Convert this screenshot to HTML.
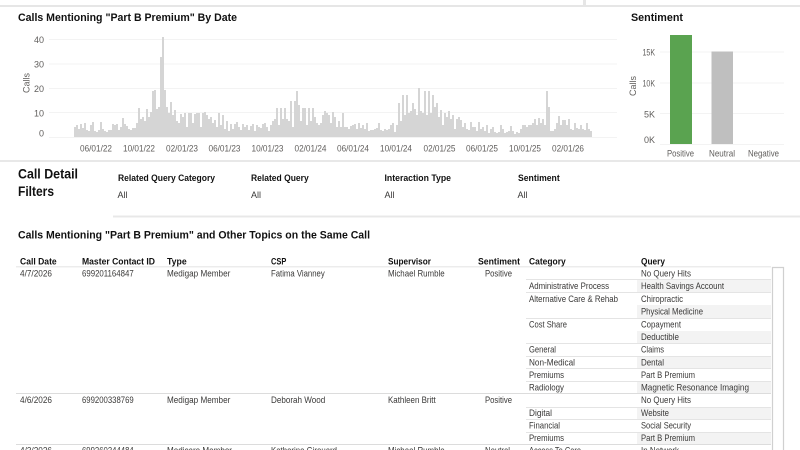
<!DOCTYPE html>
<html lang="en">
<head>
<meta charset="utf-8">
<title>Calls Mentioning Part B Premium</title>
<style>
html,body{margin:0;padding:0;background:#fff;width:800px;height:450px;overflow:hidden}
svg{display:block;filter:blur(.25px)}
text{font-family:"Liberation Sans",sans-serif;font-size:9px;fill:#3a3938}
.t{font-weight:bold;font-size:11px;fill:#111}
.h{font-weight:bold;font-size:9px;fill:#111}
.a{fill:#605e5c;font-size:9px}
.m{text-anchor:middle}
.e{text-anchor:end}
</style>
</head>
<body>
<svg width="800" height="450" viewBox="0 0 800 450" xmlns="http://www.w3.org/2000/svg">
<rect x="0" y="5" width="800" height="2" fill="#e6e6e6"/>
<rect x="583" y="0" width="3" height="5" fill="#e6e6e6"/>
<rect x="0" y="160" width="800" height="2" fill="#e8e8e8"/>
<rect x="113" y="215.5" width="687" height="2" fill="#e8e8e8"/>

<text class="t" x="18" y="21" textLength="219" lengthAdjust="spacingAndGlyphs">Calls Mentioning "Part B Premium" By Date</text>
<g stroke="#f3f3f3" stroke-width="1">
<path d="M49 39.5H617M49 64H617M49 88.5H617M49 112.5H617M49 137.5H617"/>
</g>
<g fill="none" stroke="#d5d5d5" stroke-width="2">
<path d="M75 137v-10m2 10v-12m2 12v-8m2 8v-13m2 13v-9m2 9v-14m2 14v-7m2 7v-6m2 6v-12m2 12v-15m2 15v-6m2 6v-5m2 5v-7m2 7v-15m2 15v-8m2 8v-6m2 6v-5m2 5v-7m2 7v-7m2 7v-13m2 13v-12m2 12v-13m2 13v-7m2 7v-10m2 10v-19m2 19v-13m2 13v-11m2 11v-8m2 8v-7m2 7v-9m2 9v-9m2 9v-14"/>
<path d="M139 137v-29m2 29v-18m2 18v-20m2 20v-16m2 16v-28m2 28v-20m2 20v-25m2 25v-46m2 46v-47m2 47v-28m2 28v-30m2 30v-80m2 80v-100m2 100v-47m2 47v-30m2 30v-24m2 24v-35m2 35v-22m2 22v-27m2 27v-16m2 16v-14"/>
<path d="M179 137v-12m2 12v-23m2 23v-20m2 20v-24m2 24v-10m2 10v-24m2 24v-24m2 24v-14m2 14v-23m2 23v-24m2 24v-24m2 24v-10m2 10v-24m2 24v-25m2 25v-22m2 22v-18m2 18v-20m2 20v-14m2 14v-17m2 17v-10m2 10v-24m2 24v-12m2 12v-22m2 22v-8m2 8v-16m2 16v-6m2 6v-13m2 13v-8m2 8v-13m2 13v-15m2 15v-10m2 10v-7m2 7v-13m2 13v-10m2 10v-12m2 12v-7m2 7v-11m2 11v-13m2 13v-6m2 6v-12m2 12v-10m2 10v-9m2 9v-13m2 13v-14m2 14v-10m2 10v-6m2 6v-12"/>
<path d="M273 137v-16m2 16v-18m2 18v-29m2 29v-12m2 12v-29m2 29v-18m2 18v-29m2 29v-18m2 18v-16m2 16v-36m2 36v-10m2 10v-36m2 36v-46m2 46v-32m2 32v-16m2 16v-29m2 29v-29m2 29v-12m2 12v-29m2 29v-16m2 16v-29m2 29v-20m2 20v-14m2 14v-12m2 12v-14m2 14v-22m2 22v-26m2 26v-24m2 24v-22m2 22v-14m2 14v-25m2 25v-20"/>
<path d="M337 137v-10m2 10v-16m2 16v-10m2 10v-24m2 24v-10m2 10v-10m2 10v-8m2 8v-11m2 11v-12m2 12v-13m2 13v-8m2 8v-14m2 14v-9m2 9v-12m2 12v-8m2 8v-14m2 14v-6m2 6v-7m2 7v-7m2 7v-8m2 8v-9m2 9v-14m2 14v-7m2 7v-6m2 6v-8m2 8v-7m2 7v-8m2 8v-12m2 12v-14m2 14v-5m2 5v-12"/>
<path d="M399 137v-34m2 34v-16m2 16v-42m2 42v-22m2 22v-42m2 42v-24m2 24v-26m2 26v-34m2 34v-28m2 28v-22m2 22v-49m2 49v-26m2 26v-24m2 24v-46m2 46v-22m2 22v-46m2 46v-24m2 24v-42m2 42v-30m2 30v-34m2 34v-20m2 20v-27m2 27v-12m2 12v-24m2 24v-20m2 20v-26m2 26v-18m2 18v-22m2 22v-8m2 8v-18m2 18v-20m2 20v-17m2 17v-10m2 10v-14m2 14v-8m2 8v-7m2 7v-15m2 15v-10m2 10v-10m2 10v-6m2 6v-15m2 15v-8m2 8v-10m2 10v-6m2 6v-12m2 12v-4m2 4v-8"/>
<path d="M493 137v-10m2 10v-5m2 5v-4m2 4v-5m2 5v-12m2 12v-8m2 8v-4m2 4v-5m2 5v-6m2 6v-11m2 11v-6m2 6v-3m2 3v-5m2 5v-4m2 4v-8m2 8v-12m2 12v-12m2 12v-10m2 10v-12m2 12v-12m2 12v-14m2 14v-18m2 18v-12m2 12v-19m2 19v-14m2 14v-18m2 18v-12m2 12v-46m2 46v-30m2 30v-6m2 6v-6m2 6v-8m2 8v-14m2 14v-21m2 21v-12m2 12v-17m2 17v-17m2 17v-12m2 12v-18m2 18v-8m2 8v-7m2 7v-14m2 14v-9m2 9v-8m2 8v-12m2 12v-8m2 8v-7m2 7v-14m2 14v-8m2 8v-6"/>
</g>
<text class="a e" x="44" y="43">40</text>
<text class="a e" x="44" y="67.5">30</text>
<text class="a e" x="44" y="92">20</text>
<text class="a e" x="44" y="116.500">10</text>
<text class="a e" x="44" y="136.500">0</text>
<text class="a m" transform="translate(29.5,83) rotate(-90)" x="0" y="0">Calls</text>
<text class="a m" x="96" y="151.500" textLength="32" lengthAdjust="spacingAndGlyphs">06/01/22</text>
<text class="a m" x="139" y="151.500" textLength="32" lengthAdjust="spacingAndGlyphs">10/01/22</text>
<text class="a m" x="182" y="151.500" textLength="32" lengthAdjust="spacingAndGlyphs">02/01/23</text>
<text class="a m" x="224.5" y="151.500" textLength="32" lengthAdjust="spacingAndGlyphs">06/01/23</text>
<text class="a m" x="267.5" y="151.500" textLength="32" lengthAdjust="spacingAndGlyphs">10/01/23</text>
<text class="a m" x="310.5" y="151.500" textLength="32" lengthAdjust="spacingAndGlyphs">02/01/24</text>
<text class="a m" x="353" y="151.500" textLength="32" lengthAdjust="spacingAndGlyphs">06/01/24</text>
<text class="a m" x="396" y="151.500" textLength="32" lengthAdjust="spacingAndGlyphs">10/01/24</text>
<text class="a m" x="439.5" y="151.500" textLength="32" lengthAdjust="spacingAndGlyphs">02/01/25</text>
<text class="a m" x="482" y="151.500" textLength="32" lengthAdjust="spacingAndGlyphs">06/01/25</text>
<text class="a m" x="525" y="151.500" textLength="32" lengthAdjust="spacingAndGlyphs">10/01/25</text>
<text class="a m" x="568" y="151.500" textLength="32" lengthAdjust="spacingAndGlyphs">02/01/26</text>

<text class="t" x="631" y="21" textLength="52" lengthAdjust="spacingAndGlyphs">Sentiment</text>
<path d="M660 52H784M660 83H784M660 113.500H784M660 144.500H784" stroke="#f3f3f3" stroke-width="1" fill="none"/>
<rect x="670" y="35" width="22" height="109" fill="#5aa350"/>
<rect x="711.500" y="51.500" width="21.500" height="92.500" fill="#bfbfbf"/>
<text class="a e" x="655" y="55.500" textLength="12.500" lengthAdjust="spacingAndGlyphs">15K</text>
<text class="a e" x="655" y="86.500" textLength="12.500" lengthAdjust="spacingAndGlyphs">10K</text>
<text class="a e" x="655" y="117.500">5K</text>
<text class="a e" x="655" y="143">0K</text>
<text class="a m" transform="translate(636,86) rotate(-90)" x="0" y="0">Calls</text>
<text class="a m" x="680.500" y="156.500" textLength="27" lengthAdjust="spacingAndGlyphs">Positive</text>
<text class="a m" x="722" y="156.500" textLength="26" lengthAdjust="spacingAndGlyphs">Neutral</text>
<text class="a m" x="763.500" y="156.500" textLength="31" lengthAdjust="spacingAndGlyphs">Negative</text>

<text x="18" y="178.500" style="font-weight:bold;font-size:13.500px;fill:#111" textLength="60" lengthAdjust="spacingAndGlyphs">Call Detail</text>
<text x="18" y="196" style="font-weight:bold;font-size:13.500px;fill:#111" textLength="36" lengthAdjust="spacingAndGlyphs">Filters</text>
<text class="h" x="118" y="181" textLength="97" lengthAdjust="spacingAndGlyphs">Related Query Category</text>
<text class="h" x="251" y="181" textLength="57.700" lengthAdjust="spacingAndGlyphs">Related Query</text>
<text class="h" x="384.500" y="181" textLength="66.500" lengthAdjust="spacingAndGlyphs">Interaction Type</text>
<text class="h" x="518" y="181" textLength="41.700" lengthAdjust="spacingAndGlyphs">Sentiment</text>
<text x="117.500" y="198">All</text>
<text x="251" y="198">All</text>
<text x="384.500" y="198">All</text>
<text x="517.500" y="198">All</text>

<text class="t" x="18" y="238.500" textLength="352" lengthAdjust="spacingAndGlyphs">Calls Mentioning "Part B Premium" and Other Topics on the Same Call</text>

<g fill="#f3f3f3">
<rect x="637" y="280" width="134" height="12"/>
<rect x="637" y="305" width="134" height="13"/>
<rect x="637" y="331" width="134" height="12"/>
<rect x="637" y="356" width="134" height="12"/>
<rect x="637" y="381" width="134" height="13"/>
<rect x="637" y="407" width="134" height="12"/>
<rect x="637" y="432" width="134" height="12"/>
</g>
<rect x="16" y="266" width="755" height="1.500" fill="#ececec"/>
<path d="M526 279.500H771M526 292.500H771M526 318.500H771M526 343.500H771M526 356.500H771M526 368.500H771M526 381.500H771M526 407.500H771M526 419.500H771M526 432.500H771" stroke="#e4e4e4" stroke-width="1" fill="none"/>
<path d="M16 393.500H771M16 444.500H771" stroke="#dcdcdc" stroke-width="1" fill="none"/>
<path d="M772.500 451V267.500H783.500V451" fill="none" stroke="#d0d0d0" stroke-width="1.200"/>

<text class="h" x="20" y="264.500" textLength="36.700" lengthAdjust="spacingAndGlyphs">Call Date</text>
<text class="h" x="82" y="264.500" textLength="73" lengthAdjust="spacingAndGlyphs">Master Contact ID</text>
<text class="h" x="167" y="264.500" textLength="19.700" lengthAdjust="spacingAndGlyphs">Type</text>
<text class="h" x="271" y="264.500" textLength="15.300" lengthAdjust="spacingAndGlyphs">CSP</text>
<text class="h" x="388" y="264.500" textLength="43" lengthAdjust="spacingAndGlyphs">Supervisor</text>
<text class="h" x="478" y="264.500" textLength="42" lengthAdjust="spacingAndGlyphs">Sentiment</text>
<text class="h" x="529" y="264.500" textLength="36.700" lengthAdjust="spacingAndGlyphs">Category</text>
<text class="h" x="641" y="264.500" textLength="24" lengthAdjust="spacingAndGlyphs">Query</text>

<text x="20" y="276.500" textLength="32" lengthAdjust="spacingAndGlyphs">4/7/2026</text>
<text x="82" y="276.500" textLength="51.700" lengthAdjust="spacingAndGlyphs">699201164847</text>
<text x="167" y="276.500" textLength="63.300" lengthAdjust="spacingAndGlyphs">Medigap Member</text>
<text x="271" y="276.500" textLength="53.700" lengthAdjust="spacingAndGlyphs">Fatima Vianney</text>
<text x="388" y="276.500" textLength="56.700" lengthAdjust="spacingAndGlyphs">Michael Rumble</text>
<text x="485" y="276.500" textLength="27" lengthAdjust="spacingAndGlyphs">Positive</text>

<text x="20" y="403" textLength="32" lengthAdjust="spacingAndGlyphs">4/6/2026</text>
<text x="82" y="403" textLength="51.700" lengthAdjust="spacingAndGlyphs">699200338769</text>
<text x="167" y="403" textLength="63.300" lengthAdjust="spacingAndGlyphs">Medigap Member</text>
<text x="271" y="403" textLength="54.300" lengthAdjust="spacingAndGlyphs">Deborah Wood</text>
<text x="388" y="403" textLength="47.700" lengthAdjust="spacingAndGlyphs">Kathleen Britt</text>
<text x="485" y="403" textLength="27" lengthAdjust="spacingAndGlyphs">Positive</text>

<text x="20" y="453.500" textLength="32" lengthAdjust="spacingAndGlyphs">4/3/2026</text>
<text x="82" y="453.500" textLength="51.700" lengthAdjust="spacingAndGlyphs">699260344484</text>
<text x="167" y="453.500" textLength="65" lengthAdjust="spacingAndGlyphs">Medicare Member</text>
<text x="271" y="453.500" textLength="66" lengthAdjust="spacingAndGlyphs">Katherine Girouard</text>
<text x="388" y="453.500" textLength="56.700" lengthAdjust="spacingAndGlyphs">Michael Rumble</text>
<text x="485" y="453.500" textLength="25" lengthAdjust="spacingAndGlyphs">Neutral</text>

<text x="529" y="289" textLength="80" lengthAdjust="spacingAndGlyphs">Administrative Process</text>
<text x="529" y="302" textLength="89" lengthAdjust="spacingAndGlyphs">Alternative Care &amp; Rehab</text>
<text x="529" y="327.500" textLength="38" lengthAdjust="spacingAndGlyphs">Cost Share</text>
<text x="529" y="352.500" textLength="27" lengthAdjust="spacingAndGlyphs">General</text>
<text x="529" y="365.500" textLength="46" lengthAdjust="spacingAndGlyphs">Non-Medical</text>
<text x="529" y="378" textLength="35" lengthAdjust="spacingAndGlyphs">Premiums</text>
<text x="529" y="390.500" textLength="35" lengthAdjust="spacingAndGlyphs">Radiology</text>
<text x="529" y="416" textLength="23" lengthAdjust="spacingAndGlyphs">Digital</text>
<text x="529" y="428.500" textLength="31" lengthAdjust="spacingAndGlyphs">Financial</text>
<text x="529" y="441" textLength="35" lengthAdjust="spacingAndGlyphs">Premiums</text>
<text x="529" y="453.500" textLength="52" lengthAdjust="spacingAndGlyphs">Access To Care</text>

<text x="641" y="276.500" textLength="50" lengthAdjust="spacingAndGlyphs">No Query Hits</text>
<text x="641" y="289" textLength="83" lengthAdjust="spacingAndGlyphs">Health Savings Account</text>
<text x="641" y="302" textLength="42" lengthAdjust="spacingAndGlyphs">Chiropractic</text>
<text x="641" y="314.500" textLength="62" lengthAdjust="spacingAndGlyphs">Physical Medicine</text>
<text x="641" y="327.500" textLength="40" lengthAdjust="spacingAndGlyphs">Copayment</text>
<text x="641" y="340" textLength="38" lengthAdjust="spacingAndGlyphs">Deductible</text>
<text x="641" y="352.500" textLength="23" lengthAdjust="spacingAndGlyphs">Claims</text>
<text x="641" y="365.500" textLength="23" lengthAdjust="spacingAndGlyphs">Dental</text>
<text x="641" y="378" textLength="54" lengthAdjust="spacingAndGlyphs">Part B Premium</text>
<text x="641" y="390.500" textLength="108" lengthAdjust="spacingAndGlyphs">Magnetic Resonance Imaging</text>
<text x="641" y="403" textLength="50" lengthAdjust="spacingAndGlyphs">No Query Hits</text>
<text x="641" y="416" textLength="28" lengthAdjust="spacingAndGlyphs">Website</text>
<text x="641" y="428.500" textLength="50" lengthAdjust="spacingAndGlyphs">Social Security</text>
<text x="641" y="441" textLength="54" lengthAdjust="spacingAndGlyphs">Part B Premium</text>
<text x="641" y="453.500" textLength="38" lengthAdjust="spacingAndGlyphs">In Network</text>
</svg>
</body>
</html>
